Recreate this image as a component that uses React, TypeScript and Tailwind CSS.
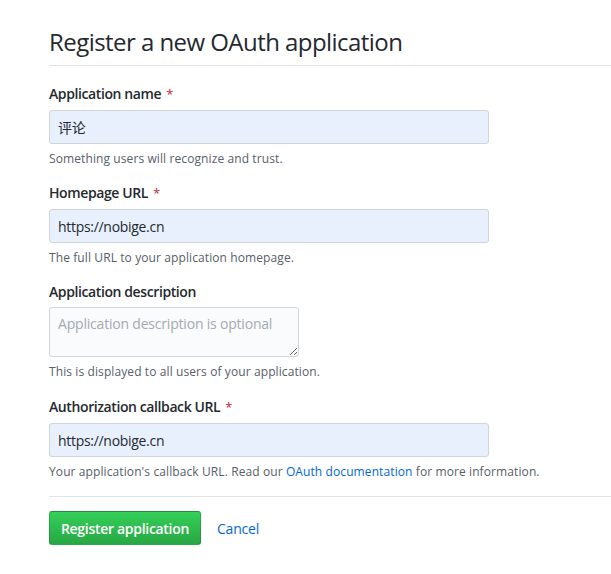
import React from "react";

const font = { fontFamily: '"Open Sans", "Noto Sans CJK SC", sans-serif' };

function Field({
  label,
  required,
  children,
  note,
  className,
}: {
  label: string;
  required?: boolean;
  children: React.ReactNode;
  note: React.ReactNode;
  className: string;
}) {
  return (
    <div className={className}>
      <label className="block text-[14px] leading-[21px] font-semibold tracking-[-0.4px] text-[#24292e] mb-[5px]">
        {label}
        {required && <span className="text-[#cb2431] font-normal ml-[5px] text-[13px]">*</span>}
      </label>
      {children}
      <p className="mt-[6px] text-[12px] leading-[18px] tracking-[0.1px] text-[#586069]">{note}</p>
    </div>
  );
}

const inputCls =
  "block w-[440px] h-[34px] px-2 text-[14px] tracking-[-0.3px] text-[#24292e] bg-[#e8f0fe] border border-[#d1d5da] rounded-[3px] outline-none";

export default function App() {
  return (
    <div className="min-h-[574px] bg-white pl-[49px] pt-[24px]" style={font}>
      <div className="border-b border-[#e1e4e8] pb-[5px] mb-[17px]">
        <h1 className="text-[24px] leading-[36px] font-normal tracking-[-0.55px] text-[#24292e]">
          Register a new OAuth application
        </h1>
      </div>

      <form>
        <Field
          className="mb-[14px]"
          label="Application name"
          required
          note="Something users will recognize and trust."
        >
          <input readOnly value="评论" className={inputCls} />
        </Field>

        <Field
          className="mb-[14px]"
          label="Homepage URL"
          required
          note="The full URL to your application homepage."
        >
          <input readOnly value="https://nobige.cn" className={inputCls} />
        </Field>

        <Field
          className="mb-[15px]"
          label="Application description"
          note="This is displayed to all users of your application."
        >
          <textarea
            placeholder="Application description is optional"
            className="block w-[250px] h-[50px] px-2 py-[6px] text-[14px] leading-[20px] tracking-[-0.2px] text-[#24292e] bg-[#fafbfc] border border-[#d1d5da] rounded-[3px] placeholder:text-[#a3aab1] outline-none"
          />
        </Field>

        <Field
          className="mb-[15px]"
          label="Authorization callback URL"
          required
          note={
            <>
              Your application's callback URL. Read our{" "}
              <a href="#" className="text-[#0366d6]">
                OAuth documentation
              </a>{" "}
              for more information.
            </>
          }
        >
          <input readOnly value="https://nobige.cn" className={inputCls} />
        </Field>
      </form>

      <div className="border-t border-[#e1e4e8] pt-[14px] flex items-center">
        <button
          type="button"
          className="h-[34px] w-[152px] rounded-[3px] border border-[rgba(27,31,35,0.2)] bg-gradient-to-b from-[#34d058] to-[#28a745] text-[14px] font-semibold tracking-[-0.3px] text-white"
        >
          Register application
        </button>
        <a href="#" className="ml-4 text-[14px] tracking-[-0.2px] text-[#0366d6]">
          Cancel
        </a>
      </div>
    </div>
  );
}
